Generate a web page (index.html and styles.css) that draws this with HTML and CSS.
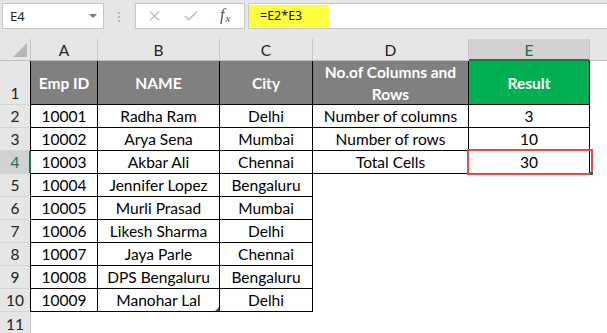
FILE: index.html
```html
<!DOCTYPE html>
<html>
<head>
<meta charset="utf-8">
<link rel="stylesheet" href="styles.css">
</head>
<body>
<div class="fbar">
  <div class="namebox"><span class="nb-text">E4</span><span class="nb-arrow"></span></div>
  <div class="grip"><i></i><i></i><i></i></div>
  <div class="fx-box">
    <svg class="ico-x" width="11" height="10" viewBox="0 0 11 10"><path d="M1 0.5 L10 9.5 M10 0.5 L1 9.5" stroke="#bdbdbd" stroke-width="1.3" fill="none"/></svg>
    <svg class="ico-check" width="14" height="10" viewBox="0 0 14 10"><path d="M0.8 5 L4.6 8.8 L13.2 0.6" stroke="#bdbdbd" stroke-width="1.5" fill="none"/></svg>
    <span class="fx">f<span class="fx-sub">x</span></span>
  </div>
  <div class="formula"><span class="hl">=E2*E3</span></div>
</div>
<div class="sheet">
  <div class="corner"><span class="tri"></span></div>
  <div class="ch ch-a">A</div>
  <div class="ch">B</div>
  <div class="ch">C</div>
  <div class="ch">D</div>
  <div class="ch ch-sel">E</div>
  <div class="ch ch-f"></div>

  <div class="rh">1</div>
  <div class="c a hd">Emp ID</div>
  <div class="c hd">NAME</div>
  <div class="c hd">City</div>
  <div class="c hd hd-wrap">No.of Columns and Rows</div>
  <div class="c hd hd-green">Result</div>
  <div class="e"></div>

  <div class="rh">2</div>
  <div class="c a">10001</div>
  <div class="c">Radha Ram</div>
  <div class="c">Delhi</div>
  <div class="c">Number of columns</div>
  <div class="c">3</div>
  <div class="e"></div>

  <div class="rh">3</div>
  <div class="c a">10002</div>
  <div class="c">Arya Sena</div>
  <div class="c">Mumbai</div>
  <div class="c">Number of rows</div>
  <div class="c">10</div>
  <div class="e"></div>

  <div class="rh rh-sel">4</div>
  <div class="c a a-sel">10003</div>
  <div class="c">Akbar Ali</div>
  <div class="c">Chennai</div>
  <div class="c">Total Cells</div>
  <div class="c active">30</div>
  <div class="e"></div>

  <div class="rh">5</div>
  <div class="c a">10004</div>
  <div class="c">Jennifer Lopez</div>
  <div class="c">Bengaluru</div>
  <div class="e"></div><div class="e"></div><div class="e"></div>

  <div class="rh">6</div>
  <div class="c a">10005</div>
  <div class="c">Murli Prasad</div>
  <div class="c">Mumbai</div>
  <div class="e"></div><div class="e"></div><div class="e"></div>

  <div class="rh">7</div>
  <div class="c a">10006</div>
  <div class="c">Likesh Sharma</div>
  <div class="c">Delhi</div>
  <div class="e"></div><div class="e"></div><div class="e"></div>

  <div class="rh">8</div>
  <div class="c a">10007</div>
  <div class="c">Jaya Parle</div>
  <div class="c">Chennai</div>
  <div class="e"></div><div class="e"></div><div class="e"></div>

  <div class="rh">9</div>
  <div class="c a">10008</div>
  <div class="c">DPS Bengaluru</div>
  <div class="c">Bengaluru</div>
  <div class="e"></div><div class="e"></div><div class="e"></div>

  <div class="rh">10</div>
  <div class="c a">10009</div>
  <div class="c marked">Manohar Lal</div>
  <div class="c">Delhi</div>
  <div class="e"></div><div class="e"></div><div class="e"></div>

  <div class="rh rh-last">11</div>
  <div class="e e-first"></div>
  <div class="e"></div><div class="e"></div><div class="e"></div><div class="e"></div><div class="e"></div>
</div>
</body>
</html>
```

FILE: styles.css
```css
html, body {
  margin: 0;
  padding: 0;
  background: #ffffff;
  overflow: hidden;
}
body {
  font-family: "Lato", "Liberation Sans", sans-serif;
  width: 607px;
  height: 333px;
}

/* ---------- formula bar ---------- */
.fbar {
  height: 39px;
  background: #e6e6e6;
  display: flex;
  align-items: flex-start;
  padding: 3px 0 0 2px;
  box-sizing: border-box;
}
.namebox {
  width: 102px;
  height: 26px;
  box-sizing: border-box;
  border: 1px solid #c6c6c6;
  background: #ffffff;
  display: flex;
  align-items: center;
  justify-content: space-between;
  padding: 0 6px 0 7px;
}
.nb-text {
  font-family: "Noto Sans", "Open Sans", sans-serif;
  font-size: 13px;
  color: #222;
}
.nb-arrow {
  width: 0;
  height: 0;
  border-left: 4px solid transparent;
  border-right: 4px solid transparent;
  border-top: 4px solid #777;
}
.grip {
  margin: 9px 0 0 14px;
  width: 2px;
  display: flex;
  flex-direction: column;
  gap: 2px;
}
.grip i {
  display: block;
  width: 2px;
  height: 2px;
  background: #b5b5b5;
}
.fx-box {
  margin-left: 15px;
  width: 110px;
  height: 26px;
  box-sizing: border-box;
  border: 1px solid #c6c6c6;
  background: #ffffff;
  display: flex;
  align-items: center;
  padding-left: 13px;
}
.ico-check { margin-left: 24px; }
.fx {
  margin-left: 22px;
  font-family: "Liberation Serif", serif;
  font-style: italic;
  font-size: 16px;
  color: #4d4d4d;
  line-height: 1;
  margin-top: -2px;
}
.fx-sub {
  font-size: 11px;
  position: relative;
  top: 2px;
  margin-left: 1px;
}
.formula {
  margin-left: 3px;
  flex: 1;
  height: 26px;
  box-sizing: border-box;
  border: 1px solid #c6c6c6;
  border-right: none;
  background: #ffffff;
  padding: 1px 0 0 0;
  display: flex;
}
.hl {
  width: 80px;
  height: 22px;
  background: #fdfd40;
  box-sizing: border-box;
  padding-left: 11px;
  font-family: "Noto Sans", "Open Sans", sans-serif;
  font-size: 12.5px;
  line-height: 22px;
  color: #111;
}

/* ---------- sheet grid ---------- */
.sheet {
  display: grid;
  grid-template-columns: 30px 68px 122px 93px 156px 121px 1fr;
  grid-template-rows: 22px 44px repeat(10, 23px);
  font-size: 15.5px;
  color: #000;
}
.corner {
  background: #e6e6e6;
  border-bottom: 1px solid #bdbdbd;
  position: relative;
}
.tri {
  position: absolute;
  right: 3px;
  bottom: 3px;
  width: 0;
  height: 0;
  border-left: 14px solid transparent;
  border-bottom: 14px solid #b6b6b6;
}
.ch {
  background: #e6e6e6;
  border-right: 1px solid #c6c6c6;
  border-bottom: 1px solid #bdbdbd;
  display: flex;
  align-items: center;
  justify-content: center;
  color: #222;
  font-size: 15.5px;
  padding-top: 1px;
  box-sizing: border-box;
}
.ch-a { border-left: 1px solid #c6c6c6; }
.ch-sel {
  background: #d2d2d2;
  color: #217346;
  border-bottom: 2px solid #217346;
}
.ch-f { border-right: none; }

.rh {
  background: #e6e6e6;
  border-bottom: 1px solid #d4d4d4;
  display: flex;
  align-items: flex-end;
  justify-content: center;
  color: #222;
  font-size: 15.5px;
  line-height: 20px;
  padding-bottom: 1px;
  box-sizing: border-box;
}
.rh-sel {
  background: #d2d2d2;
  color: #217346;
  box-shadow: inset -1px 0 0 #217346;
}
.rh-last { border-bottom: none; }

.c {
  border-right: 1px solid #000;
  border-bottom: 1px solid #000;
  box-sizing: border-box;
  display: flex;
  align-items: flex-end;
  justify-content: center;
  text-align: center;
  line-height: 20px;
  padding-bottom: 1px;
  white-space: nowrap;
}
.c.a { border-left: 1px solid #000; }
.c.a.a-sel { border-left-color: #217346; }
.e { background: #fff; }
.e-first { border-left: 1px solid #c6c6c6; }

.hd {
  background: #808080;
  color: #ffffff;
  font-weight: bold;
  align-items: center;
  padding-bottom: 0;
}
.hd-wrap {
  white-space: normal;
  line-height: 22px;
  padding: 0 4px;
}
.hd-green { background: #00b050; }

.active { position: relative; }
.active::after {
  content: "";
  position: absolute;
  left: -2px;
  top: -2px;
  width: 126px;
  height: 26px;
  box-sizing: border-box;
  border: 2px solid #f04646;
}
.active::before {
  content: "";
  position: absolute;
  left: 121px;
  top: 21px;
  width: 3px;
  height: 3px;
  background: #217346;
  z-index: 1;
}
.marked { position: relative; }
.marked::after {
  content: "";
  position: absolute;
  right: 0;
  bottom: 0;
  width: 0;
  height: 0;
  border-left: 4px solid transparent;
  border-bottom: 4px solid #3b58b0;
}
```
